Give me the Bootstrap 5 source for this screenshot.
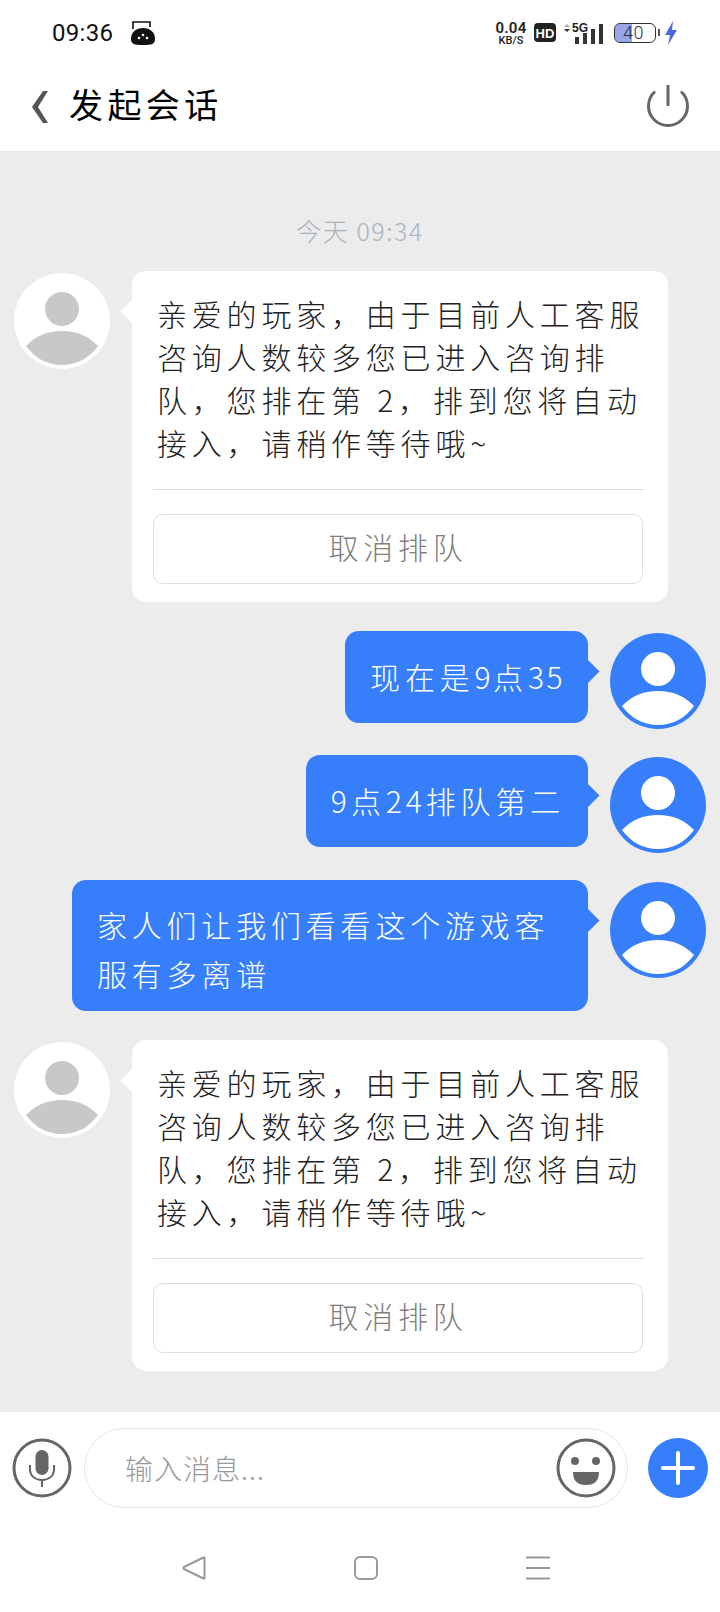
<!DOCTYPE html>
<html lang="zh-CN">
<head>
    <meta charset="UTF-8">
    <meta name="viewport" content="width=device-width, initial-scale=1.0">
    <title>发起会话</title>
    <link href="https://cdn.jsdelivr.net/npm/bootstrap@5.3.0/dist/css/bootstrap.min.css" rel="stylesheet">
    <style>
        body { width: 720px; height: 1612px; overflow: hidden; font-family: "Noto Sans CJK SC", "Liberation Sans", sans-serif; font-weight: 300; }
        .phone { height: 1612px; }
        .status-row { height: 66px; padding: 0 42px 0 52px; font-family: Roboto, "Liberation Sans", sans-serif; }
        .status-time { font-size: 24px; font-weight: 400; color: #111; width: 78px; letter-spacing: .3px; }
        .net-speed { width: 34px; margin-right: 6px; text-align: center; color: #222; font-weight: 500; line-height: 1; }
        .net-speed b { display: block; font-size: 15px; font-weight: 600; line-height: 14px; letter-spacing: .3px; }
        .net-speed span { display: block; font-size: 11px; line-height: 11px; }
        .battery-box { width: 42px; height: 20px; border: 1.5px solid #333; border-radius: 6px; position: relative; font-size: 18px; line-height: 17px; color: #333; text-align: right; padding-right: 11px; letter-spacing: .5px; background: linear-gradient(90deg, #97a6ea 17px, #fff 17px); background-clip: padding-box; }
        .battery-box::after { content: ""; position: absolute; right: -5px; top: 5px; width: 2px; height: 7px; background: #555; }
        .head-bar { height: 86px; padding: 0 32px 4px; border-bottom: 1px solid #e6e6e6; }
        .head-title { font-size: 34px; line-height: 1; letter-spacing: 4.4px; color: #000; margin: 0 0 6px 21px; font-weight: 400; }
        .power-btn { margin-right: -2px; }
        .chat-area { height: 1260px; background: #ececec; padding-top: 61px; }
        .chat-time { font-size: 25px; line-height: 34px; color: #a8b3bd; letter-spacing: 1.5px; margin-bottom: 24px; }
        .msg-row { padding: 0 14px; gap: 22px; }
        .from-them { margin-bottom: 29px; }
        .from-me { margin-bottom: 26px; }
        .from-me-last { margin-top: 27px; margin-bottom: 29px; }
        .msg-avatar { width: 96px; height: 96px; margin-top: 2px; flex: none; }
        .bubble-box { position: relative; border-radius: 14px; font-size: 30px; letter-spacing: 4.8px; white-space: nowrap; }
        .bubble-box::before { content: ""; position: absolute; top: 32px; width: 17px; height: 17px; transform: rotate(45deg); background: inherit; }
        .bubble-white { width: 536px; background: #fff; color: #222; padding: 21px 25px 18px 25px; line-height: 43px; }
        .bubble-white::before { left: -8px; }
        .bubble-blue { background: #377ffa; color: #fff; line-height: 44px; padding: 23px 23px 25px 25px; }
        .bubble-blue::before { right: -8px; }
        .bubble-long { width: 516px; line-height: 49px; padding: 20px 23px 13px 25px; }
        .num-text { letter-spacing: 2.5px; }
        .num-wide { letter-spacing: 4px; }
        .bubble-rule { margin: 25px -1px 24px -4px; border-color: #dcdcdc; opacity: 1; }
        .queue-btn { display: block; width: 490px; height: 70px; margin-left: -4px; border: 1px solid #dedede; border-radius: 10px; font-size: 30px; letter-spacing: 4.8px; color: #808080; font-weight: 300; padding: 0 0 6px; }
        .foot-bar { padding: 16px 12px 0; height: 200px; }
        .round-icon { width: 60px; height: 60px; flex: none; display: block; }
        .msg-input { width: 544px; height: 80px; margin: 0 20px 0 12px; border: 1px solid #e6e6e6; border-radius: 40px; padding: 0 11px 0 40px; }
        .msg-hint { font-size: 28px; letter-spacing: 1px; color: #999; }
        .nav-keys { gap: 148px; padding-left: 12px; margin-top: 48px; }
    </style>
</head>
<body class="bg-white">
    <div class="phone d-flex flex-column">
        <div class="status-row d-flex align-items-center">
            <span class="status-time">09:36</span>
            <svg width="26" height="26" viewBox="0 0 26 26">
                <path d="M3 9V2H20V7" fill="none" stroke="#111" stroke-width="1.6"/>
                <path d="M1 19C1 12 6 8 13 8S25 12 25 19C25 24 22 25 13 25S1 24 1 19Z" fill="#111"/>
                <circle cx="9" cy="18" r="1.3" fill="#fff"/><circle cx="13" cy="15" r="1.3" fill="#fff"/><circle cx="17" cy="18" r="1.3" fill="#fff"/>
            </svg>
            <div class="ms-auto d-flex align-items-center">
                <div class="net-speed"><b>0.04</b><span>KB/S</span></div>
                <svg width="22" height="20" viewBox="0 0 22 20" class="me-2">
                    <rect width="22" height="19" rx="4" fill="#222"/>
                    <text x="11" y="14.500" font-size="13" font-weight="700" text-anchor="middle" fill="#fff" font-family="Liberation Sans">HD</text>
                </svg>
                <svg width="42" height="30" viewBox="0 -4 42 30" class="me-2">
                    <path d="M0 5L3 2L6 5Z" fill="#aaa"/><path d="M0 7H6L3 10Z" fill="#333"/>
                    <text x="8" y="10" font-size="12" font-weight="700" fill="#222" font-family="Liberation Sans">5G</text>
                    <rect x="11" y="15" width="4" height="7" fill="#333"/><rect x="19" y="11" width="4" height="11" fill="#333"/><rect x="27" y="7" width="4" height="15" fill="#333"/><rect x="35" y="2" width="4" height="20" fill="#333"/>
                </svg>
                <div class="battery-box">40</div>
                <svg width="14" height="24" viewBox="0 0 14 24" class="ms-2"><path d="M9 0L1 14H6L4 24L13 9H8Z" fill="#5067e0"/></svg>
            </div>
        </div>

        <div class="head-bar d-flex align-items-center">
            <svg width="16" height="32" viewBox="0 0 16 32"><path d="M11 0H16L6 16L16 32H11L0 16Z" fill="#555"/></svg>
            <span class="head-title">发起会话</span>
            <svg class="ms-auto power-btn" width="44" height="44" viewBox="0 0 44 44">
                <path d="M9 6.500A19.500 19.500 0 1 0 35 6.500" fill="none" stroke="#666" stroke-width="3"/>
                <path d="M22 0V21" stroke="#666" stroke-width="3"/>
            </svg>
        </div>

        <div class="chat-area">
            <div class="chat-time text-center">今天 09:34</div>

            <div class="msg-row from-them d-flex">
                <svg class="msg-avatar" viewBox="0 0 96 96"><circle cx="48" cy="48" r="48" fill="#fff"/><circle cx="48" cy="36" r="17" fill="#c8c8c8"/><path d="M12 73Q26 58 48 58T84 73Q70 92 48 92T12 73Z" fill="#c8c8c8"/></svg>
                <div class="bubble-box bubble-white">
                    亲爱的玩家，由于目前人工客服<br>咨询人数较多您已进入咨询排<br>队，您排在第 2，排到您将自动<br>接入，请稍作等待哦~
                    <hr class="bubble-rule">
                    <button type="button" class="btn queue-btn">取消排队</button>
                </div>
            </div>

            <div class="msg-row from-me d-flex justify-content-end">
                <div class="bubble-box bubble-blue align-self-start">现在是<span class="num-text">9</span>点<span class="num-text">35</span></div>
                <svg class="msg-avatar" viewBox="0 0 96 96"><circle cx="48" cy="48" r="48" fill="#377ffa"/><circle cx="48" cy="36" r="17" fill="#fff"/><path d="M12 73Q26 58 48 58T84 73Q70 92 48 92T12 73Z" fill="#fff"/></svg>
            </div>

            <div class="msg-row from-me d-flex justify-content-end">
                <div class="bubble-box bubble-blue align-self-start"><span class="num-wide">9</span>点<span class="num-wide">24</span>排队第二</div>
                <svg class="msg-avatar" viewBox="0 0 96 96"><circle cx="48" cy="48" r="48" fill="#377ffa"/><circle cx="48" cy="36" r="17" fill="#fff"/><path d="M12 73Q26 58 48 58T84 73Q70 92 48 92T12 73Z" fill="#fff"/></svg>
            </div>

            <div class="msg-row from-me-last d-flex justify-content-end">
                <div class="bubble-box bubble-blue bubble-long align-self-start">家人们让我们看看这个游戏客<br>服有多离谱</div>
                <svg class="msg-avatar" viewBox="0 0 96 96"><circle cx="48" cy="48" r="48" fill="#377ffa"/><circle cx="48" cy="36" r="17" fill="#fff"/><path d="M12 73Q26 58 48 58T84 73Q70 92 48 92T12 73Z" fill="#fff"/></svg>
            </div>

            <div class="msg-row from-them d-flex">
                <svg class="msg-avatar" viewBox="0 0 96 96"><circle cx="48" cy="48" r="48" fill="#fff"/><circle cx="48" cy="36" r="17" fill="#c8c8c8"/><path d="M12 73Q26 58 48 58T84 73Q70 92 48 92T12 73Z" fill="#c8c8c8"/></svg>
                <div class="bubble-box bubble-white">
                    亲爱的玩家，由于目前人工客服<br>咨询人数较多您已进入咨询排<br>队，您排在第 2，排到您将自动<br>接入，请稍作等待哦~
                    <hr class="bubble-rule">
                    <button type="button" class="btn queue-btn">取消排队</button>
                </div>
            </div>
        </div>

        <div class="foot-bar bg-white">
            <div class="d-flex align-items-center">
                <svg class="round-icon" viewBox="0 0 60 60">
                    <circle cx="30" cy="30" r="28" fill="none" stroke="#666" stroke-width="3"/>
                    <rect x="23.500" y="12" width="13" height="25" rx="6.500" fill="#666"/>
                    <path d="M18 27V31C18 38 23 42 30 42S42 38 42 31V27M30 42V49" fill="none" stroke="#666" stroke-width="2"/>
                </svg>
                <div class="msg-input d-flex align-items-center justify-content-between">
                    <span class="msg-hint">输入消息...</span>
                    <svg class="round-icon" viewBox="0 0 60 60">
                        <circle cx="30" cy="30" r="28" fill="none" stroke="#666" stroke-width="3"/>
                        <circle cx="19" cy="23" r="4" fill="#666"/><circle cx="40" cy="23" r="4" fill="#666"/>
                        <path d="M17 34H43Q43 47 30 47T17 34Z" fill="#666"/>
                    </svg>
                </div>
                <svg class="round-icon" viewBox="0 0 60 60">
                    <circle cx="30" cy="30" r="30" fill="#377ffa"/>
                    <path d="M30 15V45M15 30H45" stroke="#fff" stroke-width="4" stroke-linecap="round"/>
                </svg>
            </div>
            <div class="nav-keys d-flex justify-content-center">
                <svg width="24" height="24" viewBox="0 0 24 24"><path d="M22.500 2Q22.500 1 21.500 1.500L2 11Q1 12 2 13L21.500 22.500Q22.500 23 22.500 22Z" fill="none" stroke="#999" stroke-width="2" stroke-linejoin="round"/></svg>
                <svg width="24" height="24" viewBox="0 0 24 24"><rect x="1" y="1" width="22" height="22" rx="5" fill="none" stroke="#999" stroke-width="2"/></svg>
                <svg width="24" height="24" viewBox="0 0 24 24"><path d="M0 1.500H24M0 12H24M0 22.500H24" stroke="#999" stroke-width="2"/></svg>
            </div>
        </div>
    </div>
</body>
</html>
